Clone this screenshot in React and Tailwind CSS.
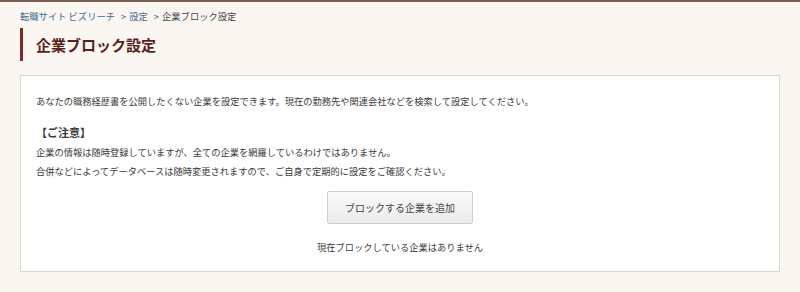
export default function App() {
    return (
        <div
            className="min-h-[292px] w-full border-t-2 border-[#7a5e52] bg-[#faf7f2] px-5 text-[#3a3a3a]"
            style={{ fontFamily: '"Noto Sans CJK JP", "Noto Sans", sans-serif' }}
        >
            <nav className="flex items-center pt-[7px] text-[9.3px] leading-[14px]">
                <a className="text-[#3f6a8f]">転職サイト ビズリーチ</a>
                <span className="ml-[6px] text-[#666]">&gt;</span>
                <a className="ml-[3px] text-[#3f6a8f]">設定</a>
                <span className="ml-[6px] text-[#666]">&gt;</span>
                <span className="ml-[3px] text-[#444]">企業ブロック設定</span>
            </nav>

            <div className="mt-[5px] flex h-[33px] items-center border-l-[3px] border-[#7d2a2a] pl-[13px]">
                <h1 className="text-[15px] font-bold leading-none text-[#5a1f1f]">企業ブロック設定</h1>
            </div>

            <section className="mt-[14px] h-[197px] border border-[#ddd8cf] bg-white px-[15px] pt-[18px] text-[9.25px] leading-[14px]">
                <p>あなたの職務経歴書を公開したくない企業を設定できます。現在の勤務先や関連会社などを検索して設定してください。</p>

                <h3 className="mt-[17px] text-[11px] font-bold leading-[15px]">【ご注意】</h3>
                <p className="mt-[5px]">企業の情報は随時登録していますが、全ての企業を網羅しているわけではありません。</p>
                <p className="mt-[5px]">合併などによってデータベースは随時変更されますので、ご自身で定期的に設定をご確認ください。</p>

                <div className="mt-[13px] flex justify-center">
                    <button
                        type="button"
                        className="h-[33px] w-[146px] rounded-[2px] border border-[#cfcfcf] bg-gradient-to-b from-[#fafafa] to-[#ebebeb] text-[10px] text-[#444]"
                    >
                        ブロックする企業を追加
                    </button>
                </div>

                <p className="mt-[16px] text-center">現在ブロックしている企業はありません</p>
            </section>
        </div>
    );
}
